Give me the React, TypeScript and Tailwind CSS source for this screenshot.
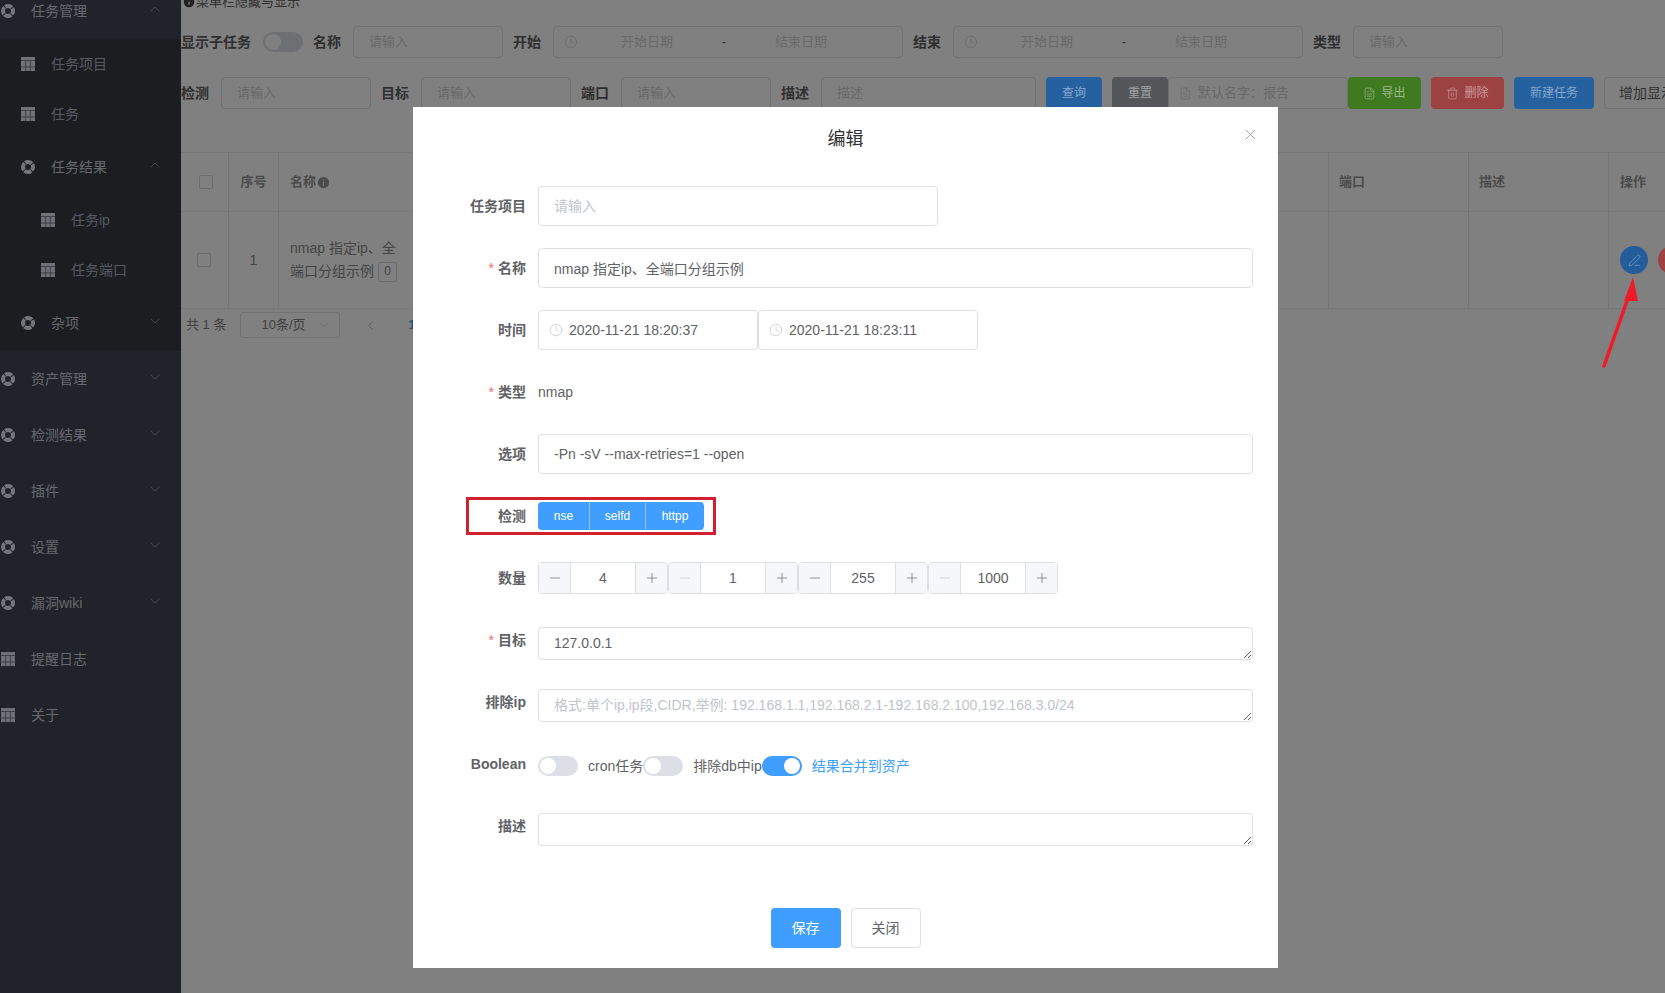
import { ChevronDown, ChevronLeft, ChevronUp, Clock, FileText, Info, Minus, PenLine, Plus, Trash2, X } from "lucide-react";

function HelpIcon() {
  return (
    <svg width="14" height="14" viewBox="0 0 14 14" className="shrink-0">
      <circle cx="7" cy="7" r="5" fill="none" stroke="#74767b" strokeWidth="4" strokeDasharray="7.05 0.8" strokeDashoffset="3.52" />
    </svg>
  );
}

function GridIcon() {
  return (
    <svg width="14" height="14" viewBox="0 0 14 14" className="shrink-0">
      <rect width="14" height="14" fill="#6f7177" />
      <path d="M0 3.5H14M0 10H14M4.7 3.5V14M9.3 3.5V14" stroke="#33353b" strokeWidth="0.8" fill="none" />
    </svg>
  );
}

type MenuItem = {
  label: string;
  icon: "help" | "grid";
  depth: 0 | 1 | 2;
  chevron?: "up" | "down";
  leaf?: boolean;
};

const TOP_ITEMS: MenuItem[] = [
  { label: "任务管理", icon: "help", depth: 0, chevron: "up" },
];

const SUB_ITEMS: MenuItem[] = [
  { label: "任务项目", icon: "grid", depth: 1, leaf: true },
  { label: "任务", icon: "grid", depth: 1, leaf: true },
  { label: "任务结果", icon: "help", depth: 1, chevron: "up" },
  { label: "任务ip", icon: "grid", depth: 2, leaf: true },
  { label: "任务端口", icon: "grid", depth: 2, leaf: true },
  { label: "杂项", icon: "help", depth: 1, chevron: "down" },
];

const REST_ITEMS: MenuItem[] = [
  { label: "资产管理", icon: "help", depth: 0, chevron: "down" },
  { label: "检测结果", icon: "help", depth: 0, chevron: "down" },
  { label: "插件", icon: "help", depth: 0, chevron: "down" },
  { label: "设置", icon: "help", depth: 0, chevron: "down" },
  { label: "漏洞wiki", icon: "help", depth: 0, chevron: "down" },
  { label: "提醒日志", icon: "grid", depth: 0 },
  { label: "关于", icon: "grid", depth: 0 },
];

function SideItem({ item }: { item: MenuItem }) {
  const indent = item.depth === 0 ? "pl-[1px]" : item.depth === 1 ? "pl-[21px]" : "pl-[41px]";
  return (
    <div className={`flex items-center ${item.leaf ? "h-[50px]" : "h-[56px]"} ${indent}`}>
      {item.icon === "help" ? <HelpIcon /> : <GridIcon />}
      <span className={`ml-[16px] text-[14px] ${item.leaf ? "text-[#565a64]" : "text-[#67696e]"}`}>{item.label}</span>
      {item.chevron === "up" && <ChevronUp size={16} strokeWidth={1} className="ml-auto mr-[18px] -mt-[4px] text-[#55575d]" />}
      {item.chevron === "down" && <ChevronDown size={16} strokeWidth={1} className="ml-auto mr-[18px] -mt-[4px] text-[#55575d]" />}
    </div>
  );
}

function Sidebar() {
  return (
    <aside className="w-[181px] shrink-0 h-full overflow-hidden bg-[#21232b]">
      <div className="-mt-[17px]">
        {TOP_ITEMS.map((item) => (
          <SideItem key={item.label} item={item} />
        ))}
        <div className="bg-[#1c1d21]">
          {SUB_ITEMS.map((item) => (
            <SideItem key={item.label} item={item} />
          ))}
        </div>
        {REST_ITEMS.map((item) => (
          <SideItem key={item.label} item={item} />
        ))}
      </div>
    </aside>
  );
}

function BgLabel({ text, first = false }: { text: string; first?: boolean }) {
  return <span className={`shrink-0 text-[14px] font-bold text-[#2f2f2f] mr-[12px] ${first ? "" : "ml-[10px]"}`}>{text}</span>;
}

function BgInput({ placeholder, width }: { placeholder: string; width: string }) {
  return (
    <div className={`h-8 shrink-0 flex items-center rounded-[4px] border border-[#727272] pl-[15px] text-[13px] text-[#696969] ${width}`}>
      {placeholder}
    </div>
  );
}

function BgRange({ start, end }: { start: string; end: string }) {
  return (
    <div className="h-8 w-[350px] shrink-0 flex items-center rounded-[4px] border border-[#727272] pl-[5px] text-[13px] text-[#696969]">
      <Clock size={14} strokeWidth={1.2} className="ml-[5px] shrink-0" />
      <span className="ml-[1px] w-[136px] text-center">{start}</span>
      <span className="ml-[6px] w-[6px] text-center text-[#2f2f2f]">-</span>
      <span className="w-[148px] text-center">{end}</span>
    </div>
  );
}

function BgButton({ className, children }: { className: string; children: React.ReactNode }) {
  return (
    <div className={`h-8 shrink-0 flex items-center justify-center gap-[5px] rounded-[4px] ${className}`}>
      {children}
    </div>
  );
}

function Background() {
  return (
    <main className="flex-1 min-w-0 h-full overflow-hidden bg-[#808080]">
      <div className="-mt-[8px]">
        <div className="h-5 flex items-center pl-[1px] text-[13px] text-[#2f2f2f]">
          <Info size={14} fill="#222222" stroke="#808080" strokeWidth={2} className="shrink-0" />
          <span>菜单栏隐藏与显示</span>
        </div>

        <div className="mt-[14px] flex items-center">
          <BgLabel text="显示子任务" first />
          <div className="w-10 h-5 shrink-0 rounded-full bg-[#6e6f73] p-[2px]">
            <div className="w-4 h-4 rounded-full bg-[#808080]" />
          </div>
          <BgLabel text="名称" />
          <BgInput placeholder="请输入" width="w-[150px]" />
          <BgLabel text="开始" />
          <BgRange start="开始日期" end="结束日期" />
          <BgLabel text="结束" />
          <BgRange start="开始日期" end="结束日期" />
          <BgLabel text="类型" />
          <BgInput placeholder="请输入" width="w-[150px]" />
        </div>

        <div className="mt-[19px] flex items-center">
          <BgLabel text="检测" first />
          <BgInput placeholder="请输入" width="w-[150px]" />
          <BgLabel text="目标" />
          <BgInput placeholder="请输入" width="w-[150px]" />
          <BgLabel text="端口" />
          <BgInput placeholder="请输入" width="w-[150px]" />
          <BgLabel text="描述" />
          <BgInput placeholder="描述" width="w-[215px]" />
          <BgButton className="ml-[10px] w-[56px] text-[12px] bg-[#25609f] text-[#84a8ce]">查询</BgButton>
          <BgButton className="ml-[10px] w-[56px] text-[12px] bg-[#54565a] text-[#a0a1a3]">重置</BgButton>
          <div className="h-8 w-[180px] shrink-0 flex items-center rounded-[4px] border border-[#727272] pl-[10px] text-[13px] text-[#696969]">
            <FileText size={13} strokeWidth={1.2} className="mr-[6px]" />
            默认名字：报告
          </div>
          <BgButton className="w-[73px] text-[12px] bg-[#3f7a20] text-[#9cbb8b]">
            <FileText size={13} strokeWidth={1.2} />
            导出
          </BgButton>
          <BgButton className="ml-[10px] w-[73px] text-[12px] bg-[#9c4242] text-[#cb9c9c]">
            <Trash2 size={13} strokeWidth={1.2} />
            删除
          </BgButton>
          <BgButton className="ml-[10px] w-[80px] text-[12px] bg-[#25609f] text-[#84a8ce]">新建任务</BgButton>
          <BgButton className="ml-[10px] w-[100px] text-[14px] border border-[#727272] text-[#303030]">增加显示列</BgButton>
        </div>

        <div className="mt-[43px] border-t border-b border-[#767676] text-[13px]">
          <div className="h-[59px] grid grid-cols-[48px_50px_140px_1fr_140px_140px_56px] border-b border-[#767676] font-bold text-[#4b4b4b]">
            <div className="flex items-center pl-[18px] border-r border-[#767676]">
              <div className="w-[14px] h-[14px] rounded-[2px] border border-[#6c6c6c]" />
            </div>
            <div className="flex items-center justify-center border-r border-[#767676]">序号</div>
            <div className="flex items-center pl-[11px]">
              名称
              <Info size={15} fill="#4b4b4b" stroke="#808080" strokeWidth={2} />
            </div>
            <div className="border-r border-[#767676]" />
            <div className="flex items-center pl-[10px] border-r border-[#767676]">端口</div>
            <div className="flex items-center pl-[10px] border-r border-[#767676]">描述</div>
            <div className="flex items-center pl-[11px] whitespace-nowrap">操作</div>
          </div>
          <div className="h-[96px] grid grid-cols-[48px_50px_140px_1fr_140px_140px_56px] text-[14px] text-[#444444]">
            <div className="flex items-center pl-[16px] border-r border-[#767676]">
              <div className="w-[14px] h-[14px] rounded-[2px] border border-[#6c6c6c]" />
            </div>
            <div className="flex items-center justify-center border-r border-[#767676]">1</div>
            <div className="flex flex-col justify-center pl-[11px] whitespace-nowrap leading-[23px]">
              <div>nmap 指定ip、全</div>
              <div className="flex items-center">
                端口分组示例
                <span className="ml-[4px] w-[19px] h-[20px] flex items-center justify-center rounded-[3px] border border-[#6c6c6c] text-[12px]">0</span>
              </div>
            </div>
            <div className="border-r border-[#767676]" />
            <div className="border-r border-[#767676]" />
            <div className="border-r border-[#767676]" />
            <div className="flex items-center gap-[10px] pl-[11px] overflow-hidden">
              <div className="w-7 h-7 shrink-0 rounded-full bg-[#235c9b] flex items-center justify-center text-[#84a8ce]">
                <PenLine size={13} strokeWidth={1.2} />
              </div>
              <div className="w-7 h-7 shrink-0 rounded-full bg-[#9c4242]" />
            </div>
          </div>
        </div>

        <div className="mt-[3px] flex items-center pl-[5px] text-[13px] text-[#3f3f3f]">
          <span>共 1 条</span>
          <div className="ml-[14px] w-[100px] h-[26px] flex items-center justify-between rounded-[3px] border border-[#727272] pl-[20px] pr-[8px]">
            10条/页
            <ChevronDown size={14} strokeWidth={1} className="text-[#5f5f5f]" />
          </div>
          <ChevronLeft size={15} strokeWidth={1.2} className="ml-[23px] text-[#555555]" />
          <span className="ml-[30px] font-bold text-[#204f80]">1</span>
        </div>
      </div>
    </main>
  );
}

const INPUT_CLASS =
  "h-10 rounded-[4px] border border-[#dcdfe6] bg-white px-[15px] text-[14px] text-[#606266] outline-none placeholder:text-[#c0c4cc]";
const TEXTAREA_CLASS =
  "block mt-[7px] h-[33px] w-[715px] resize-y rounded-[4px] border border-[#dcdfe6] bg-white px-[15px] py-[5px] text-[14px] leading-[21px] text-[#606266] outline-none placeholder:text-[#c0c4cc]";

function FormRow({ label, required = false, children }: { label: string; required?: boolean; children: React.ReactNode }) {
  return (
    <div className="flex h-10 mb-[22px]">
      <label className="w-[113px] shrink-0 mr-3 text-right text-[14px] leading-10 font-bold text-[#606266]">
        {required && <span className="mr-1 font-normal text-[#f56c6c]">*</span>}
        {label}
      </label>
      {children}
    </div>
  );
}

function DateBox({ value }: { value: string }) {
  return (
    <div className="h-10 w-[220px] flex items-center rounded-[4px] border border-[#dcdfe6] pl-[10px] text-[14px] text-[#606266]">
      <Clock size={14} strokeWidth={1.2} className="text-[#c0c4cc]" />
      <span className="ml-[6px]">{value}</span>
    </div>
  );
}

function NumberBox({ value, minusOff = false }: { value: number; minusOff?: boolean }) {
  return (
    <div className="w-[130px] h-8 flex rounded-[4px] border border-[#dcdfe6] text-[14px] text-[#606266]">
      <div className={`w-8 shrink-0 flex items-center justify-center rounded-l-[3px] border-r border-[#dcdfe6] bg-[#f5f7fa] ${minusOff ? "text-[#c0c4cc]" : ""}`}>
        <Minus size={16} strokeWidth={1} />
      </div>
      <div className="flex-1 flex items-center justify-center">{value}</div>
      <div className="w-8 shrink-0 flex items-center justify-center rounded-r-[3px] border-l border-[#dcdfe6] bg-[#f5f7fa]">
        <Plus size={16} strokeWidth={1} />
      </div>
    </div>
  );
}

function Toggle({ on = false }: { on?: boolean }) {
  return (
    <div className={`w-10 h-5 shrink-0 flex rounded-full p-[2px] ${on ? "bg-[#409eff] justify-end" : "bg-[#dcdfe6]"}`}>
      <div className="w-4 h-4 rounded-full bg-white" />
    </div>
  );
}

function EditDialog() {
  return (
    <div className="absolute inset-0 z-10">
      <div className="absolute left-[413px] top-[107px] w-[865px] h-[861px] bg-white">
        <div className="h-[79px] pt-[20px] text-center text-[18px] leading-6 text-[#303133]">编辑</div>
        <X size={17} strokeWidth={1} className="absolute right-[19px] top-[19px] text-[#7f8287]" />

        <FormRow label="任务项目">
          <input className={`${INPUT_CLASS} w-[400px]`} placeholder="请输入" readOnly />
        </FormRow>
        <FormRow label="名称" required>
          <input className={`${INPUT_CLASS} w-[715px]`} value="nmap 指定ip、全端口分组示例" readOnly />
        </FormRow>
        <FormRow label="时间">
          <DateBox value="2020-11-21 18:20:37" />
          <DateBox value="2020-11-21 18:23:11" />
        </FormRow>
        <FormRow label="类型" required>
          <span className="text-[14px] leading-10 text-[#606266]">nmap</span>
        </FormRow>
        <FormRow label="选项">
          <input className={`${INPUT_CLASS} w-[715px]`} value="-Pn -sV --max-retries=1 --open" readOnly />
        </FormRow>
        <FormRow label="检测">
          <div className="self-center h-7 flex overflow-hidden rounded-[4px] bg-[#409eff] text-[12px] text-white">
            <span className="w-[52px] flex items-center justify-center border-r border-[#8cc5ff]">nse</span>
            <span className="w-[56px] flex items-center justify-center border-r border-[#8cc5ff]">selfd</span>
            <span className="w-[58px] flex items-center justify-center">httpp</span>
          </div>
        </FormRow>
        <FormRow label="数量">
          <div className="self-center flex">
            <NumberBox value={4} />
            <NumberBox value={1} minusOff />
            <NumberBox value={255} />
            <NumberBox value={1000} minusOff />
          </div>
        </FormRow>
        <FormRow label="目标" required>
          <textarea className={TEXTAREA_CLASS} value="127.0.0.1" readOnly />
        </FormRow>
        <FormRow label="排除ip">
          <textarea
            className={TEXTAREA_CLASS}
            placeholder="格式:单个ip,ip段,CIDR,举例: 192.168.1.1,192.168.2.1-192.168.2.100,192.168.3.0/24"
            readOnly
          />
        </FormRow>
        <FormRow label="Boolean">
          <div className="flex items-center h-10 pt-1 text-[14px] text-[#606266] whitespace-nowrap">
            <Toggle />
            <span className="ml-[10px]">cron任务</span>
            <Toggle />
            <span className="ml-[10px]">排除db中ip</span>
            <Toggle on />
            <span className="ml-[10px] text-[#409eff]">结果合并到资产</span>
          </div>
        </FormRow>
        <FormRow label="描述">
          <textarea className={TEXTAREA_CLASS} readOnly />
        </FormRow>

        <div className="mt-[62px] flex justify-center gap-[10px] text-[14px]">
          <button className="w-[70px] h-10 rounded-[4px] bg-[#409eff] text-white">保存</button>
          <button className="w-[70px] h-10 rounded-[4px] border border-[#dcdfe6] text-[#606266]">关闭</button>
        </div>

        {/* red marker around the 检测 row */}
        <div className="absolute left-[53px] top-[390px] w-[250px] h-[38px] border-[3px] border-[#d2202e]" />
      </div>

      {/* red arrow pointing at the edit button */}
      <svg className="absolute left-[1595px] top-[270px]" width="50" height="105" viewBox="0 0 50 105">
        <path d="M9 96 L33 28" stroke="#ee1c2b" strokeWidth="3.6" strokeLinecap="round" fill="none" />
        <polygon points="38,7 29,31 43,31" fill="#ee1c2b" />
      </svg>
    </div>
  );
}

export default function App() {
  return (
    <div className="relative flex h-[993px] w-[1665px] overflow-hidden font-['Liberation_Sans','Noto_Sans_CJK_SC',sans-serif]">
      <Sidebar />
      <Background />
      <EditDialog />
    </div>
  );
}
